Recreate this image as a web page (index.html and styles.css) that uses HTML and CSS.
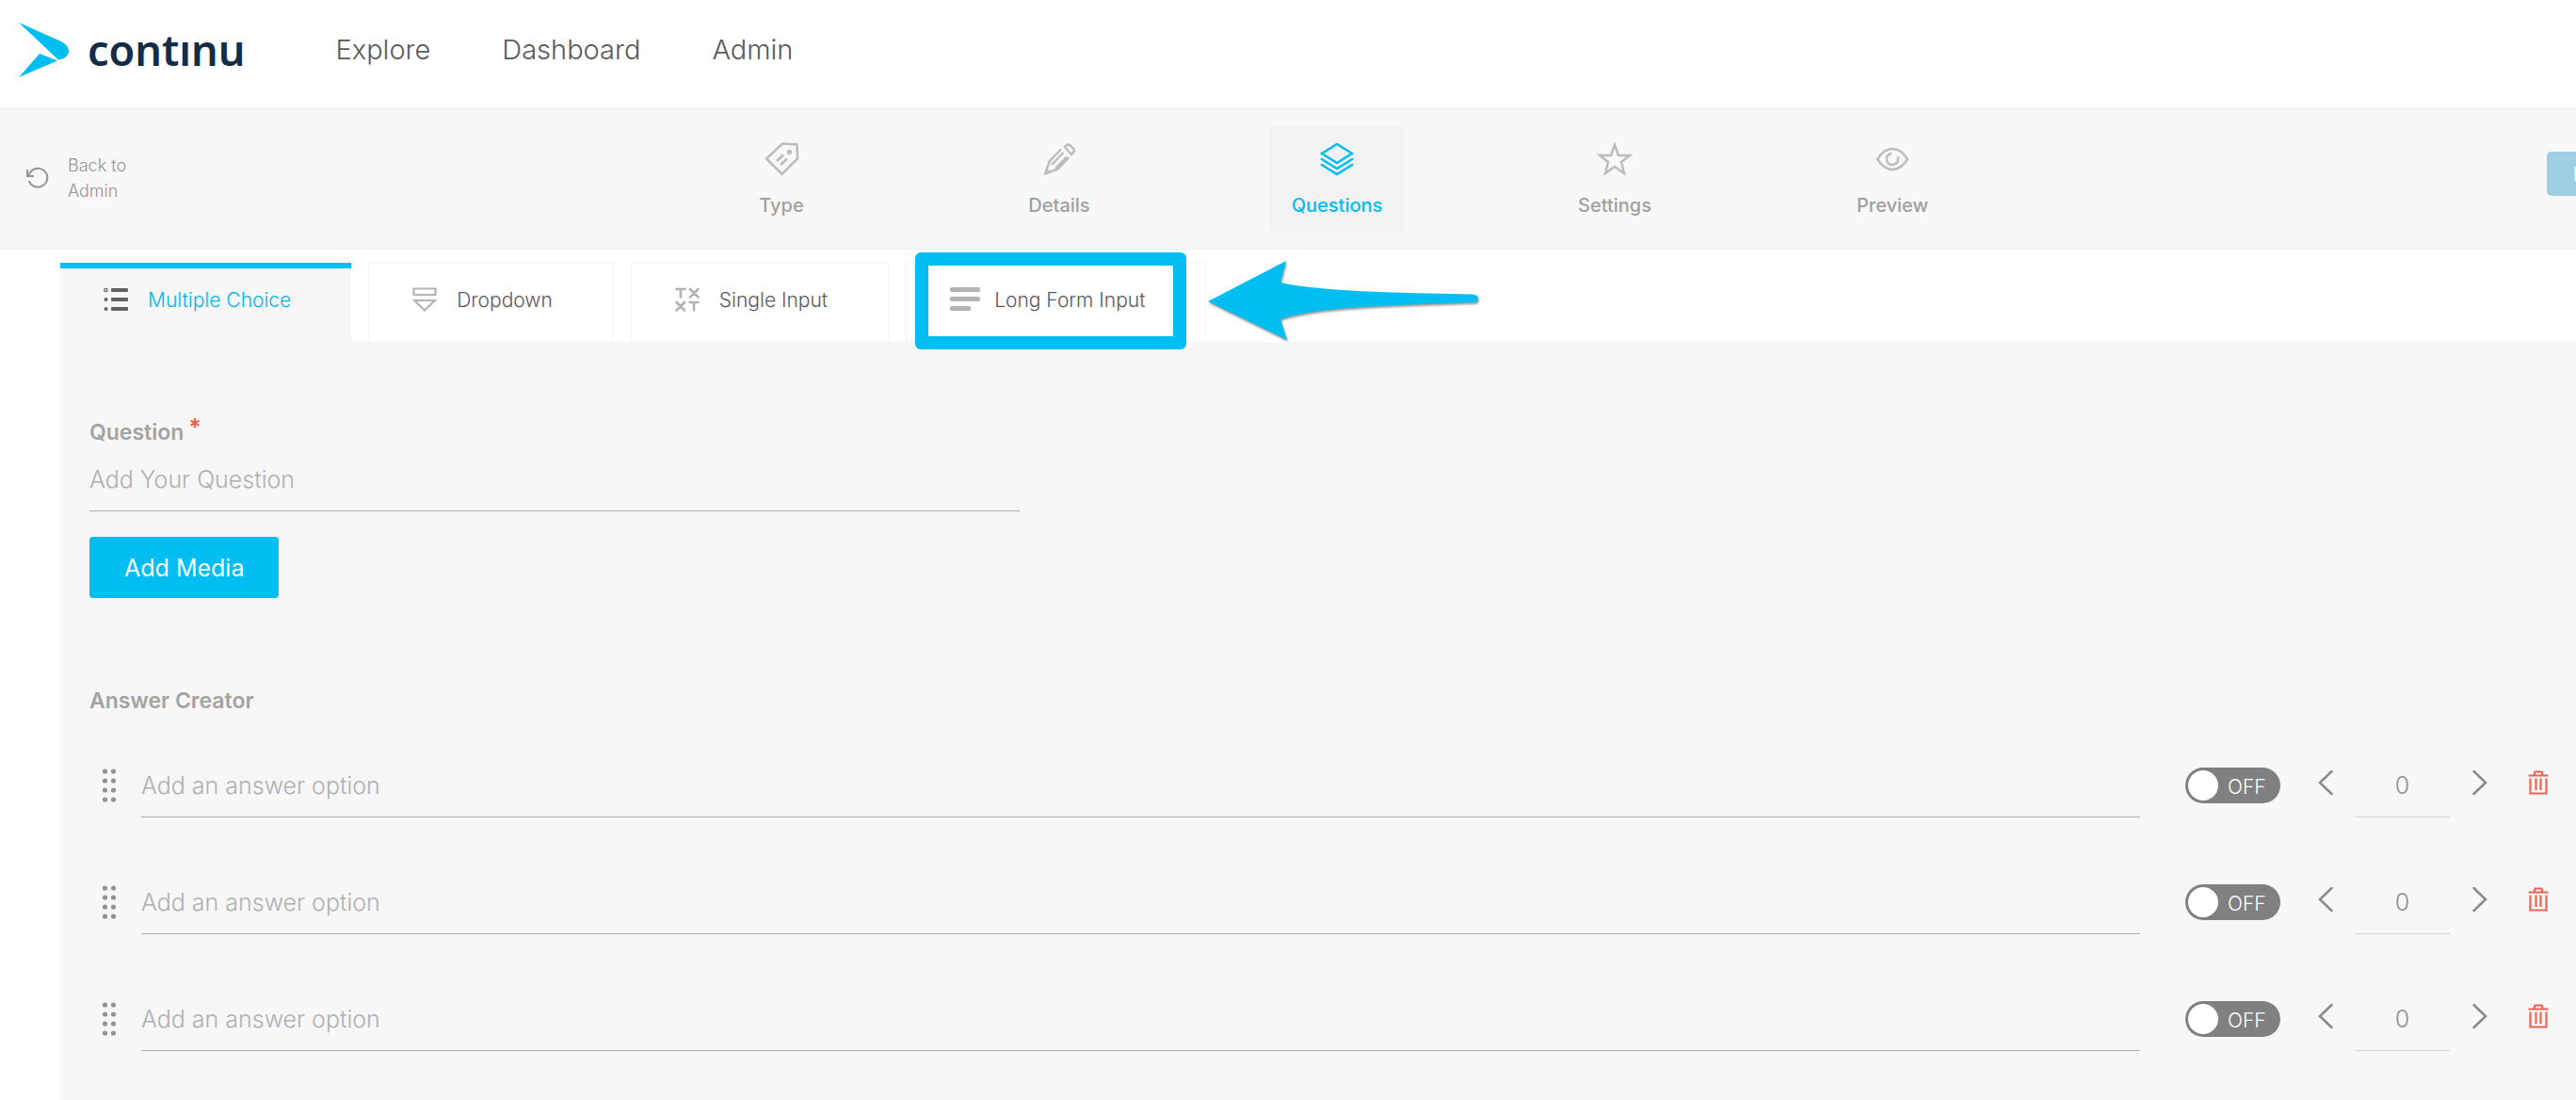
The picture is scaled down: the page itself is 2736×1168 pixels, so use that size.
FILE: index.html
```html
<!DOCTYPE html>
<html lang="en">
<head>
<meta charset="utf-8">
<title>Continu – Questions</title>
<link rel="stylesheet" href="styles.css">
</head>
<body>
<header class="site-header">
  <a class="logo" href="#" aria-label="Continu home">
    <svg class="logo-mark" width="54" height="58" viewBox="0 0 54 58" aria-hidden="true">
      <path fill="#00bdf2" d="M0 0L45 20Q53 24 53 31Q52 38 42 39.500Z"/>
      <path fill="#00bdf2" d="M0 58L22 33L41 40.500Z"/>
    </svg>
    <span class="logo-text">contınu</span>
  </a>
  <nav class="main-nav">
    <a href="#">Explore</a>
    <a href="#">Dashboard</a>
    <a href="#">Admin</a>
  </nav>
</header>

<div class="step-bar">
  <a class="back" href="#">
    <svg width="24" height="24" viewBox="0 0 24 24" fill="none" stroke="currentColor" stroke-width="2" aria-hidden="true"><path d="M1 3V10H8M2.500 9.500A10 10 0 1 1 2.800 15"/></svg>
    <span>Back to<br>Admin</span>
  </a>
  <nav class="steps">
    <a class="step" href="#">
      <svg width="38" height="38" viewBox="0 0 38 38" fill="none" stroke="currentColor" stroke-width="2.500" aria-hidden="true"><path d="M20 2.500L35.500 3.500L36 18.500L19.500 35L3 18.500Z"/><path d="M14 21L21 14.500M18 25L25 18.500" stroke-width="3"/><circle cx="27.500" cy="11.500" r="2.700" fill="currentColor" stroke="none"/></svg>
      <span>Type</span>
    </a>
    <a class="step" href="#">
      <svg width="38" height="38" viewBox="0 0 38 38" fill="none" stroke="currentColor" stroke-width="2.500" aria-hidden="true"><path d="M21 8.500L8.500 21.500L4.500 34L17 30L29.500 17M25 6L27.500 3.800Q29 3 30.500 4.200L34.500 8.500Q35.500 10 34.500 11.500L32 14ZM11 25L23.500 12M15 29L27 16.500"/><path d="M3 36L5 28L11 33Z" fill="currentColor" stroke="none"/></svg>
      <span>Details</span>
    </a>
    <a class="step active" href="#" aria-current="step">
      <svg width="38" height="38" viewBox="0 0 38 38" fill="none" stroke="currentColor" stroke-width="2.500" aria-hidden="true"><path d="M19 3L35 13L19 23L3 13ZM2 18.500L19 29L36 18.500M2 24.500L19 35L36 24.500"/></svg>
      <span>Questions</span>
    </a>
    <a class="step" href="#">
      <svg width="38" height="38" viewBox="0 0 38 38" fill="none" stroke="currentColor" stroke-width="2.500" aria-hidden="true"><path d="M19 4L23 15H35L26 22L29 34L19 27L9 34L12 22L3 15H15Z"/></svg>
      <span>Settings</span>
    </a>
    <a class="step" href="#">
      <svg width="38" height="38" viewBox="0 0 38 38" fill="none" stroke="currentColor" stroke-width="2.500" aria-hidden="true"><path d="M3 19Q10 8 19 8T35 19Q28 30 19 30T3 19ZM18 13Q12 14 13 20Q14 25 19 25Q25 24 25 19V16"/></svg>
      <span>Preview</span>
    </a>
  </nav>
  <button class="next" type="button">Next</button>
</div>

<main class="editor">
  <div class="tabs">
    <button class="tab selected" type="button">
      <svg width="26" height="26" viewBox="0 0 26 26" fill="currentColor" aria-hidden="true"><circle cx="2.500" cy="3" r="1.700" fill="none" stroke="currentColor" stroke-width="1.200"/><circle cx="2.500" cy="13" r="2"/><circle cx="2.500" cy="23" r="2"/><rect x="8" y="1" width="18" height="4" rx="1"/><rect x="8" y="11" width="18" height="4" rx="1"/><rect x="8" y="21" width="18" height="4" rx="1"/></svg>
      Multiple Choice
    </button>
    <button class="tab" type="button">
      <svg width="26" height="26" viewBox="0 0 26 26" fill="none" stroke="currentColor" stroke-width="2.200" aria-hidden="true"><path d="M1.500 1.500H24.500V8H1.500ZM2 14H24L13 24.500Z"/></svg>
      Dropdown
    </button>
    <button class="tab" type="button">
      <svg width="26" height="26" viewBox="0 0 26 26" fill="none" stroke="currentColor" stroke-width="2.600" stroke-linecap="round" aria-hidden="true"><path d="M1.500 2H10.500M6 2V10.500M16 2L24.500 10.500M24.500 2L16 10.500M1.500 16L10 24.500M10 16L1.500 24.500M15.500 16H24.500M20 16V24.500"/></svg>
      Single Input
    </button>
    <button class="tab" type="button">
      <svg class="wide" width="32" height="26" viewBox="0 0 32 26" fill="currentColor" aria-hidden="true"><rect width="32" height="5" rx="2"/><rect y="10" width="32" height="5" rx="2"/><rect y="20" width="22" height="5" rx="2"/></svg>
      Long Form Input
      <span class="highlight"></span>
      <svg class="arrow" width="300" height="100" viewBox="0 0 300 100" aria-hidden="true"><path fill="#00bdf2" d="M4 50L87 7L81 30C120 39 200 41 285 42.500Q291 43 291 47Q291 51 286 51C210 54 120 55 81 69L88 91Z"/></svg>
    </button>
  </div>

  <form class="panel">
    <label class="title" for="question">Question<span class="required">*</span></label>
    <input class="field question" id="question" type="text" placeholder="Add Your Question">
    <button class="media" type="button">Add Media</button>

    <h2 class="title">Answer Creator</h2>
    <div class="answers">
      <div class="answer">
        <svg class="handle" width="16" height="38" viewBox="0 0 16 38" fill="currentColor" aria-hidden="true"><circle cx="3.500" cy="4" r="2.600"/><circle cx="12.500" cy="4" r="2.600"/><circle cx="3.500" cy="14" r="2.600"/><circle cx="12.500" cy="14" r="2.600"/><circle cx="3.500" cy="24" r="2.600"/><circle cx="12.500" cy="24" r="2.600"/><circle cx="3.500" cy="34" r="2.600"/><circle cx="12.500" cy="34" r="2.600"/></svg>
        <input class="field" type="text" placeholder="Add an answer option" aria-label="Answer 1">
        <label class="toggle"><input type="checkbox" aria-label="Answer 1 correct"><span>OFF</span></label>
        <button class="icon-button" type="button" aria-label="Decrease"><svg width="16" height="28" viewBox="0 0 16 28"><path d="M14.500 2L2 14L14.500 26"/></svg></button>
        <input class="field score" type="text" value="0" aria-label="Answer 1 score">
        <button class="icon-button" type="button" aria-label="Increase"><svg width="16" height="28" viewBox="0 0 16 28"><path d="M1.500 2L14 14L1.500 26"/></svg></button>
        <button class="icon-button delete" type="button" aria-label="Delete"><svg width="22" height="28" viewBox="0 0 22 28"><path d="M0.500 6.500H21.500M6.500 6L7.500 2.500H14.500L15.500 6M2.500 9.500V25.500H19.500V9.500M8.500 9.500V22M13.500 9.500V22"/></svg></button>
      </div>
      <div class="answer">
        <svg class="handle" width="16" height="38" viewBox="0 0 16 38" fill="currentColor" aria-hidden="true"><circle cx="3.500" cy="4" r="2.600"/><circle cx="12.500" cy="4" r="2.600"/><circle cx="3.500" cy="14" r="2.600"/><circle cx="12.500" cy="14" r="2.600"/><circle cx="3.500" cy="24" r="2.600"/><circle cx="12.500" cy="24" r="2.600"/><circle cx="3.500" cy="34" r="2.600"/><circle cx="12.500" cy="34" r="2.600"/></svg>
        <input class="field" type="text" placeholder="Add an answer option" aria-label="Answer 2">
        <label class="toggle"><input type="checkbox" aria-label="Answer 2 correct"><span>OFF</span></label>
        <button class="icon-button" type="button" aria-label="Decrease"><svg width="16" height="28" viewBox="0 0 16 28"><path d="M14.500 2L2 14L14.500 26"/></svg></button>
        <input class="field score" type="text" value="0" aria-label="Answer 2 score">
        <button class="icon-button" type="button" aria-label="Increase"><svg width="16" height="28" viewBox="0 0 16 28"><path d="M1.500 2L14 14L1.500 26"/></svg></button>
        <button class="icon-button delete" type="button" aria-label="Delete"><svg width="22" height="28" viewBox="0 0 22 28"><path d="M0.500 6.500H21.500M6.500 6L7.500 2.500H14.500L15.500 6M2.500 9.500V25.500H19.500V9.500M8.500 9.500V22M13.500 9.500V22"/></svg></button>
      </div>
      <div class="answer">
        <svg class="handle" width="16" height="38" viewBox="0 0 16 38" fill="currentColor" aria-hidden="true"><circle cx="3.500" cy="4" r="2.600"/><circle cx="12.500" cy="4" r="2.600"/><circle cx="3.500" cy="14" r="2.600"/><circle cx="12.500" cy="14" r="2.600"/><circle cx="3.500" cy="24" r="2.600"/><circle cx="12.500" cy="24" r="2.600"/><circle cx="3.500" cy="34" r="2.600"/><circle cx="12.500" cy="34" r="2.600"/></svg>
        <input class="field" type="text" placeholder="Add an answer option" aria-label="Answer 3">
        <label class="toggle"><input type="checkbox" aria-label="Answer 3 correct"><span>OFF</span></label>
        <button class="icon-button" type="button" aria-label="Decrease"><svg width="16" height="28" viewBox="0 0 16 28"><path d="M14.500 2L2 14L14.500 26"/></svg></button>
        <input class="field score" type="text" value="0" aria-label="Answer 3 score">
        <button class="icon-button" type="button" aria-label="Increase"><svg width="16" height="28" viewBox="0 0 16 28"><path d="M1.500 2L14 14L1.500 26"/></svg></button>
        <button class="icon-button delete" type="button" aria-label="Delete"><svg width="22" height="28" viewBox="0 0 22 28"><path d="M0.500 6.500H21.500M6.500 6L7.500 2.500H14.500L15.500 6M2.500 9.500V25.500H19.500V9.500M8.500 9.500V22M13.500 9.500V22"/></svg></button>
      </div>
    </div>
  </form>
</main>
</body>
</html>
```
FILE: styles.css
```css
* { box-sizing: border-box; }

body {
  margin: 0;
  min-height: 100vh;
  display: flex;
  flex-direction: column;
  overflow-x: hidden;
  background: #fff;
  color: #58595b;
  font-family: Inter, "Liberation Sans", sans-serif;
}

a { color: inherit; text-decoration: none; }
button, input { font: inherit; color: inherit; }
button { border: 0; padding: 0; background: none; }
svg { display: block; flex: none; }

.site-header {
  display: flex;
  align-items: center;
  gap: 96px;
  padding: 24px 20px 33px;
}
.logo { display: flex; align-items: center; gap: 19px; }
.logo-text {
  color: #122c49;
  font: 600 45px/58px "Noto Sans", sans-serif;
}
.main-nav {
  display: flex;
  gap: 76px;
  font-size: 29px;
  line-height: 58px;
  font-weight: 300;
}

/* The step bar runs past the right edge of the window. */
.step-bar {
  width: calc(100% + 104px);
  display: grid;
  grid-template-columns: 1fr auto 1fr;
  align-items: center;
  padding: 18px 28px;
  border: solid #ececec;
  border-width: 1px 0;
  background: #f8f8f8;
}
.back {
  display: flex;
  align-items: center;
  gap: 20px;
  margin-bottom: 2px;
  color: #949494;
  font-size: 18px;
  line-height: 27px;
  font-weight: 300;
}
.steps { display: flex; gap: 151px; }
.step {
  width: 144px;
  height: 112px;
  padding: 16px 0 13px;
  display: flex;
  flex-direction: column;
  align-items: center;
  justify-content: space-between;
  border-radius: 6px;
  color: #bdbdbd;
  font-size: 20px;
  line-height: 30px;
  font-weight: 500;
}
.step span { color: #a0a0a0; }
.step.active { background: #f2f2f2; color: #00bdf2; }
.step.active span { color: #00bdf2; }
.next {
  justify-self: end;
  height: 47px;
  margin-bottom: 11px;
  padding: 0 35px 0 28px;
  border-radius: 5px;
  background: #9fcfe3;
  color: #fff;
  font-size: 20px;
}

.editor {
  flex: 1;
  display: flex;
  flex-direction: column;
  padding: 14px 0 0 64px;
}
.tabs { display: flex; gap: 18px; }
.tab {
  position: relative;
  display: flex;
  align-items: center;
  gap: 21px;
  height: 84px;
  padding: 0 64px 6px 46px;
  border: 1px solid #f6f6f6;
  font-size: 21px;
  font-weight: 300;
  white-space: nowrap;
}
.tab svg { color: #b3b3b3; }
.tab .wide { margin-right: -6px; }
.tab.selected {
  border: 0;
  border-top: 6px solid #00bdf2;
  padding-bottom: 12px;
  background: #f7f7f7;
  color: #00b5ef;
}
.tab.selected svg { color: #616161; }

/* Call-out drawn over the last tab */
.highlight {
  position: absolute;
  top: -12px;
  left: 9px;
  width: 288px;
  height: 103px;
  border: 14px solid #00bdf2;
  border-radius: 6px;
}
.arrow {
  position: absolute;
  top: -10px;
  left: 316px;
  filter: drop-shadow(1px 2px 1px #0006);
}

.panel {
  flex: 1;
  padding: 79px 29px 50px 31px;
  background: #f7f7f7;
}
.title {
  display: block;
  margin: 0;
  color: #a3a3a3;
  font-size: 23px;
  line-height: 32px;
  font-weight: 600;
}
.required { margin-left: 5px; color: #f0604d; font-size: 25px; line-height: 1; vertical-align: 4px; }
.field {
  flex: 1;
  min-width: 0;
  height: 68px;
  padding: 0;
  border: 0;
  border-bottom: 1px solid #acacac;
  border-radius: 0;
  outline: 0;
  background: none;
  font-size: 25px;
  font-weight: 350;
}
.field::placeholder { color: #b0b0b0; opacity: 1; }
.question { display: block; width: 100%; max-width: 988px; }
.media {
  display: block;
  height: 65px;
  margin: 27px 0 93px;
  padding: 0 37px;
  border-radius: 4px;
  background: #00bdf2;
  color: #fff;
  font-size: 25px;
}
.answers { display: grid; gap: 56px; padding-top: 40px; }
.answer { display: flex; align-items: center; }
.handle { margin: 0 26px 0 13px; color: #939393; }
.toggle {
  position: relative;
  display: flex;
  align-items: center;
  width: 101px;
  height: 38px;
  margin: 0 40px 0 48px;
  padding: 2px 0 0 45px;
  border-radius: 19px;
  background: #808080;
  color: #fff;
  font-size: 21px;
  font-weight: 300;
}
.toggle input {
  appearance: none;
  position: absolute;
  top: 3px;
  left: 3px;
  width: 32px;
  height: 32px;
  margin: 0;
  border-radius: 50%;
  background: #fff;
}
.icon-button { margin-bottom: 6px; }
.icon-button svg { fill: none; stroke: #8a8a8a; stroke-width: 2.500; stroke-linecap: round; }
.icon-button.delete { margin-left: 43px; }
.icon-button.delete svg { stroke: #ee6352; stroke-width: 2.200; stroke-linecap: butt; }
.score {
  flex: none;
  width: 101px;
  margin: 0 24px 0 23px;
  border-color: #d4d4d4;
  color: #8f8f8f;
  text-align: center;
}
```
